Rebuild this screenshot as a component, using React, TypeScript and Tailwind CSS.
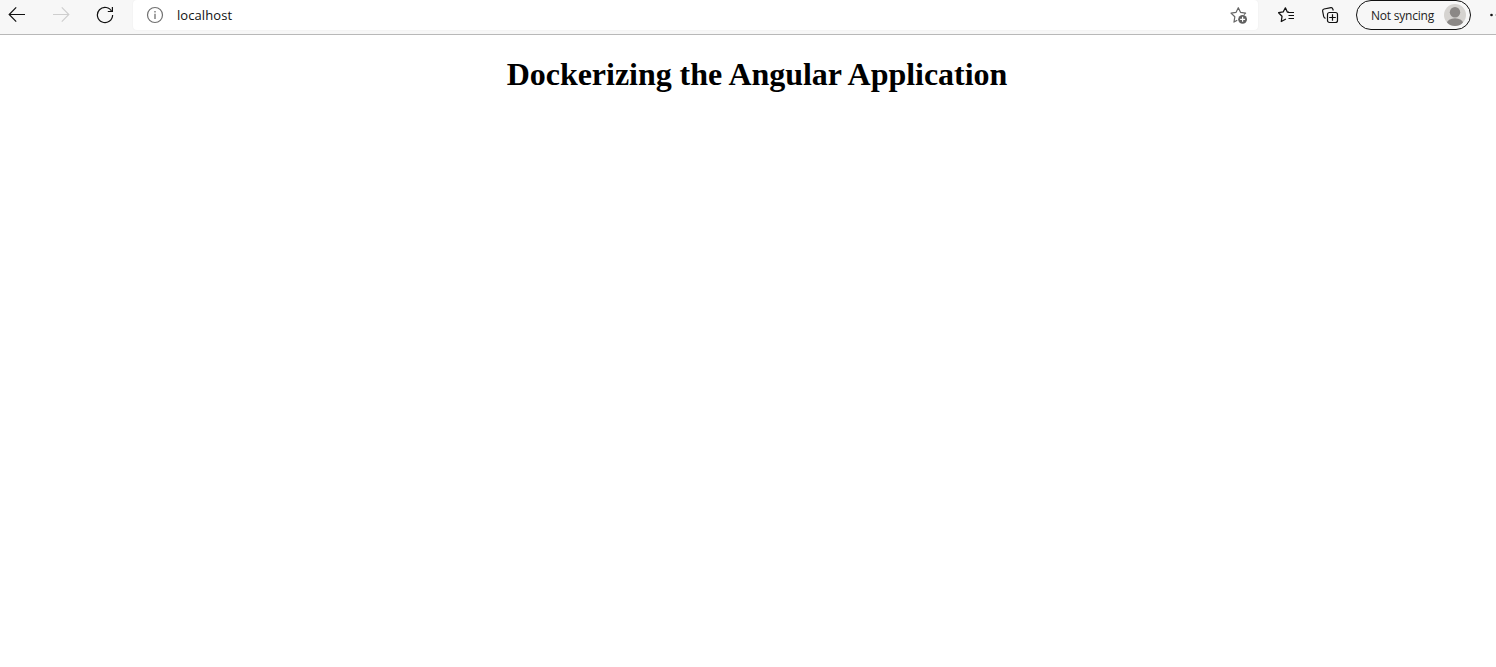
function BackIcon({ className }: { className: string }) {
  return (
    <svg viewBox="0 0 18 18" className={className} fill="none" stroke="currentColor" strokeWidth="1.2">
      <path d="M17 8.5H1.5M8.2 1.4 1.2 8.5l7 7.1" />
    </svg>
  );
}

function ReloadIcon() {
  return (
    <svg viewBox="0 0 18 18" className="h-[18px] w-[18px] shrink-0" fill="none" stroke="#111" strokeWidth="1.2">
      <path d="M15.9 5.8A7.6 7.6 0 1 0 16.6 9" />
      <path d="M16.4 1v4.5h-4.6" />
    </svg>
  );
}

function InfoIcon() {
  return (
    <svg viewBox="0 0 18 18" className="h-[18px] w-[18px] shrink-0" fill="none" stroke="#707070" strokeWidth="1.2">
      <circle cx="9" cy="9" r="7.5" />
      <path d="M9 7.7v5.3M9 5v1.5" strokeWidth="1.3" />
    </svg>
  );
}

function AddFavoriteIcon() {
  return (
    <svg viewBox="0 0 18 18" className="h-[18px] w-[18px] shrink-0" fill="none" stroke="#666" strokeWidth="1.2">
      <path d="M7.2 14.2 4 16.1l.8-5.3L1 7.1l5.1-.8L8.3 1.7l2.2 4.6 5.1.8-1.6 1.6" strokeLinejoin="round" />
      <circle cx="12.6" cy="13.3" r="4.4" fill="#606060" stroke="none" />
      <path d="M12.6 10.8v5M10.1 13.3h5" stroke="#fff" strokeWidth="1.2" />
    </svg>
  );
}

function FavoritesIcon() {
  return (
    <svg viewBox="0 0 18 18" className="h-[18px] w-[18px] shrink-0" fill="none" stroke="#111" strokeWidth="1.25">
      <path d="M12 6.2 10.3 6 8.4 1.8 6.2 5.9l-4.6.8 3.4 3.6-.7 5.2 4.6-2.5" strokeLinejoin="round" />
      <path d="M10.5 6.5H17M11.5 9.5H17M11.5 12.5H17" strokeWidth="1.1" />
    </svg>
  );
}

function CollectionsIcon() {
  return (
    <svg viewBox="0 0 18 18" className="h-[18px] w-[18px] shrink-0" fill="none" stroke="#111" strokeWidth="1.2">
      <rect x="6.5" y="6.5" width="10" height="10" rx="2" />
      <path d="M11.5 8.2v6.6M8.2 11.5h6.6" />
      <path d="M12.3 4.5 11.7 2.7Q11.3 1.4 10 1.6L3 3Q1.4 3.4 1.6 5l1.1 5.5q.3 1.4 1.8 1.8" />
    </svg>
  );
}

function Avatar() {
  return (
    <svg viewBox="0 0 22 22" className="ml-2.5 h-[22px] w-[22px] shrink-0">
      <defs>
        <clipPath id="avatar-circle">
          <circle cx="11" cy="11" r="11" />
        </clipPath>
      </defs>
      <g clipPath="url(#avatar-circle)">
        <path d="M0 0h22v22H0z" fill="#d5d3d0" />
        <circle cx="11" cy="8.2" r="5.2" fill="#8b8886" />
        <ellipse cx="11" cy="19.6" rx="8.2" ry="5.3" fill="#8b8886" />
      </g>
    </svg>
  );
}

function Toolbar() {
  return (
    <header className="flex h-[35px] items-start overflow-hidden border-b border-[#b8b8b8] bg-[#f7f7f7] font-['Open_Sans',sans-serif]">
      <nav className="flex h-[30px] w-[133px] shrink-0 items-center gap-[26px] pl-2">
        <BackIcon className="h-[18px] w-[18px] shrink-0 text-[#111]" />
        <BackIcon className="h-[18px] w-[18px] shrink-0 -scale-x-100 text-[#cecece]" />
        <ReloadIcon />
      </nav>
      <div className="flex h-[30px] w-[1125px] shrink-0 items-center rounded-[4px] bg-white pr-2.5 pl-[13px] shadow-[0_0_2px_rgba(0,0,0,0.06)]">
        <InfoIcon />
        <span className="ml-[13px] flex-1 pt-0.5 text-[13px] tracking-[0.08px] text-[#111]">localhost</span>
        <AddFavoriteIcon />
      </div>
      <div className="flex h-[30px] shrink-0 items-center">
        <div className="flex w-[98px] gap-[26px] pl-[19px]">
          <FavoritesIcon />
          <CollectionsIcon />
        </div>
        <button className="flex h-[30px] w-[115px] items-center rounded-full border border-[#111] pl-3.5 text-[12px] tracking-[-0.22px] text-[#222]">
          <span className="w-[63px] pt-px whitespace-nowrap">Not syncing</span>
          <Avatar />
        </button>
        <svg viewBox="0 0 12 4" className="ml-[18px] h-1 w-3 shrink-0" fill="#111">
          <circle cx="2.5" cy="2" r="1.3" />
          <circle cx="8" cy="2" r="1.3" />
        </svg>
      </div>
    </header>
  );
}

export default function App() {
  return (
    <div className="h-[667px] w-full overflow-hidden bg-white">
      <Toolbar />
      <main className="pt-[21px] pl-[18px] text-center font-['Liberation_Serif',serif] text-black">
        <h1 className="text-[32px] leading-[37px] font-bold tracking-[-0.03px]">Dockerizing the Angular Application</h1>
      </main>
    </div>
  );
}
